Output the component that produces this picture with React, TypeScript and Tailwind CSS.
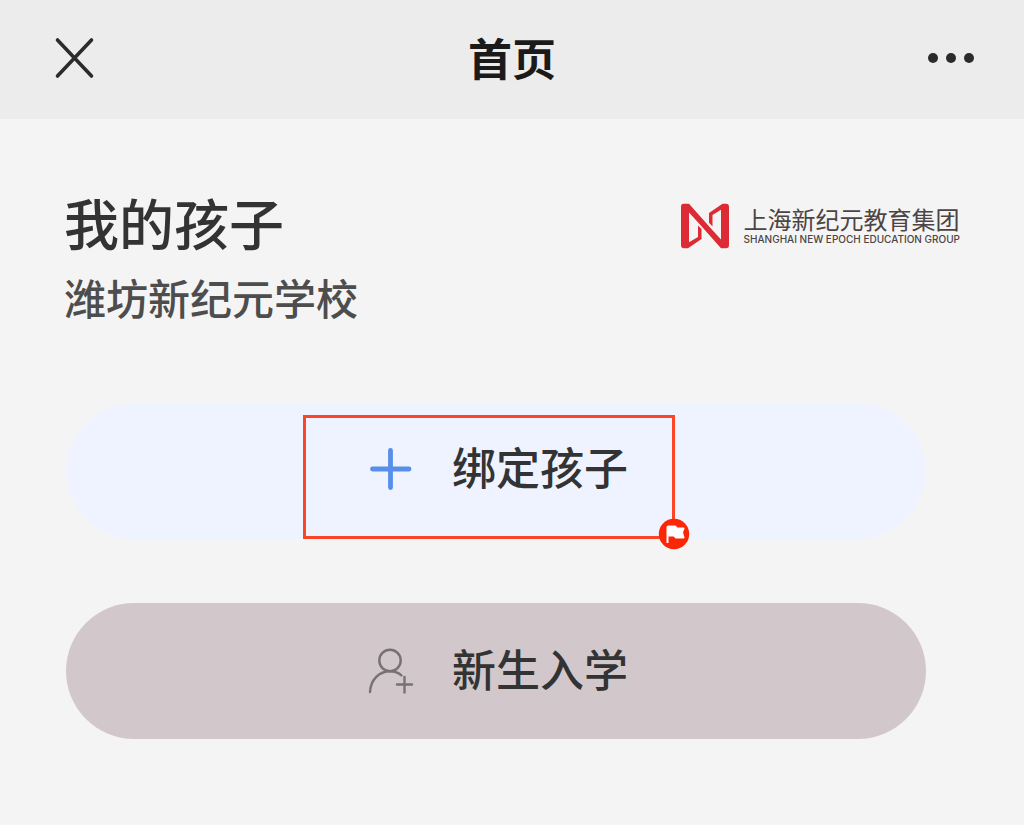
function CloseIcon() {
  return (
    <svg className="size-11" viewBox="0 0 44 44" fill="none" stroke="#2b2b2b" strokeWidth="3.6" strokeLinecap="round" aria-hidden="true">
      <path d="M5.500 4L39.500 40M39.500 4L5.500 40" />
    </svg>
  )
}

function MoreIcon() {
  return (
    <svg className="h-3 w-12" viewBox="0 0 48 12" fill="#2b2b2b" aria-hidden="true">
      <circle cx="5" cy="6" r="5" />
      <circle cx="23" cy="6" r="5" />
      <circle cx="41" cy="6" r="5" />
    </svg>
  )
}

function PlusIcon() {
  return (
    <svg className="size-11 shrink-0" viewBox="0 0 44 44" fill="none" stroke="#568eea" strokeWidth="4.800" strokeLinecap="round" aria-hidden="true">
      <path d="M22.500 3.500V40.500M4.500 22H41" />
    </svg>
  )
}

function NewStudentIcon() {
  return (
    <svg className="size-11 shrink-0 overflow-visible" viewBox="0 0 44 44" fill="none" stroke="#777176" strokeWidth="2.400" strokeLinecap="round" aria-hidden="true">
      <circle cx="22" cy="11.500" r="10.700" />
      <path d="M2 43C2.500 31 11 22.200 22 22.200C26.500 22.200 30.500 23.500 33.500 26.500" />
      <path d="M36.500 28V43.500M29 35.500H44" />
    </svg>
  )
}

function GroupMark() {
  return (
    <svg className="h-[46px] w-[50px] shrink-0" viewBox="0 0 50 46" aria-hidden="true">
      <path
        fill="#dc2b35"
        fillRule="evenodd"
        d="M3.500 .8H9L30.500 25L41 36.500V6.800L32.500 12V23.500L29 19.800V10L42.500 .8H46Q49 .8 49 4V42Q49 45.200 46 45.200H41L19.500 21L9 9.500V39.200L18 34V22.500L21.500 26V36L8 45.200H4Q1 45.200 1 42V4Q1 .8 3.500 .8Z"
      />
    </svg>
  )
}

function FlagBadge() {
  return (
    <svg className="absolute -right-[18px] -bottom-3.5 size-8" viewBox="0 0 32 32" aria-hidden="true">
      <circle cx="16" cy="16" r="15.200" fill="#fb2605" />
      <path
        d="M9.500 8.500V25M10 8.500H17L19 10.500H25.500L24 14.500L25.500 19.500H18L16 17.500H10Z"
        fill="white"
        stroke="white"
        strokeWidth="2"
        strokeLinejoin="round"
      />
    </svg>
  )
}

export default function App() {
  return (
    <div className="min-h-screen bg-[#f4f4f4] font-['Noto_Sans_CJK_SC',sans-serif] font-medium text-[#333333]">
      <header className="flex h-[119px] items-center justify-between bg-[#ececec] pr-12 pb-1 pl-[52px]">
        <button type="button" aria-label="关闭" className="flex w-11">
          <CloseIcon />
        </button>
        <h1 className="pb-0.5 text-[44px] leading-none font-bold text-[#1a1a1a]">首页</h1>
        <button type="button" aria-label="更多" className="flex w-12">
          <MoreIcon />
        </button>
      </header>

      <main className="px-16 pt-[70px]">
        <div className="flex items-start justify-between">
          <div>
            <h2 className="text-[55px] leading-[64px]">我的孩子</h2>
            <p className="mt-3 text-[42px] leading-[64px] text-[#4d4d4d]">潍坊新纪元学校</p>
          </div>
          <div className="mt-3.5 flex items-center gap-3.5">
            <GroupMark />
            <div className="text-[#4c4444]">
              <p className="text-[24px] leading-[24px] font-normal">上海新纪元教育集团</p>
              <p className="mt-0.5 font-['Inter',sans-serif] text-[10px] leading-[12px] whitespace-nowrap">
                SHANGHAI NEW EPOCH EDUCATION GROUP
              </p>
            </div>
          </div>
        </div>

        <div className="mt-[74px] mr-[34px] ml-0.5 flex flex-col gap-16 text-[44px]">
          <div className="relative">
            <button type="button" className="flex h-[136px] w-full items-center justify-center gap-10 rounded-full bg-[#eff3ff] pb-1 pl-1">
              <PlusIcon />
              <span className="pb-1.5">绑定孩子</span>
            </button>
            <div className="pointer-events-none absolute top-3 left-[calc(50%-193px)] h-[124px] w-[372px] border-3 border-[#fb4528]">
              <FlagBadge />
            </div>
          </div>
          <button type="button" className="flex h-[136px] w-full items-center justify-center gap-10 rounded-full bg-[#d2c8cc] pl-1">
            <NewStudentIcon />
            <span className="pb-1.5">新生入学</span>
          </button>
        </div>
      </main>
    </div>
  )
}
